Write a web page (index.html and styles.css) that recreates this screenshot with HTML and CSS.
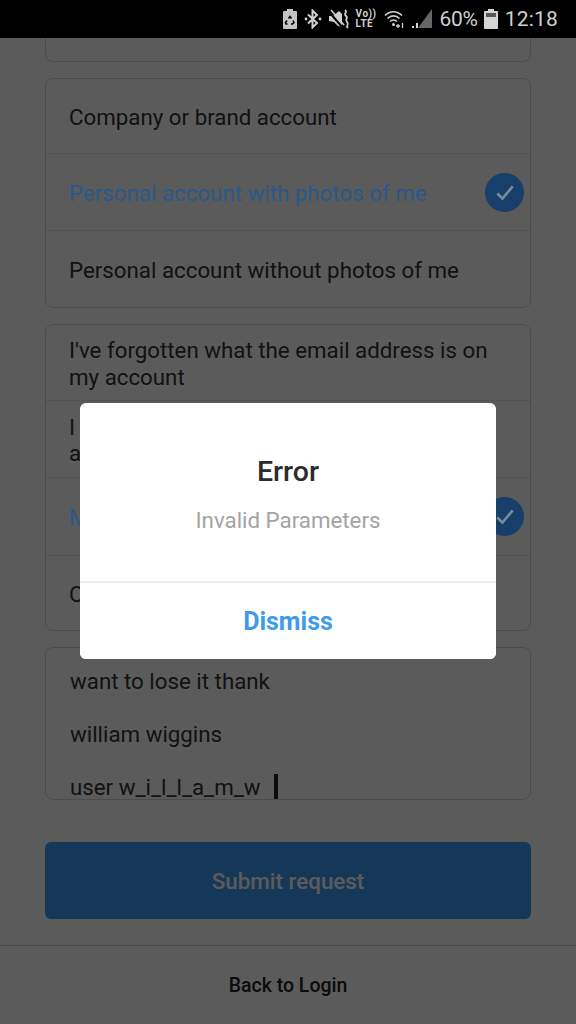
FILE: index.html
```html
<!DOCTYPE html>
<html lang="en">
<head>
<meta charset="utf-8">
<title>Error</title>
<link rel="stylesheet" href="styles.css">
</head>
<body>
<div class="phone">
  <header class="status">
    <svg class="ic-recycle" viewBox="0 0 14 20"><path fill="#c4c4c4" d="M4 0h6v2h3a1 1 0 0 1 1 1v16a1 1 0 0 1-1 1H1a1 1 0 0 1-1-1V3a1 1 0 0 1 1-1h3z"/><path fill="none" stroke="#000" stroke-width="1.500" d="M5.500 9.500 7 7.500l1.500 2M10 11.500l1 2-1.500 1.500H8M4.500 15H3l-.5-1.500L4 11.500"/></svg>
    <svg class="ic-bt" viewBox="0 0 18 20"><path fill="none" stroke="#d0d0d0" stroke-width="2" d="M4 5.500 13 14l-4.500 4.500v-17L13 6l-9 8.500"/><circle cx="2" cy="10" r="1.400" fill="#d0d0d0"/><circle cx="16" cy="10" r="1.400" fill="#d0d0d0"/></svg>
    <svg class="ic-mute" viewBox="0 0 21 20"><path fill="#cfcfcf" d="M0 7h4l6-5 3 3v13l-4-1-4-4-5-1z"/><path stroke="#000" stroke-width="2" d="M0 3l14 16"/><path stroke="#cfcfcf" stroke-width="1.600" d="M2 1l13 15"/><path fill="none" stroke="#cfcfcf" stroke-width="1.800" d="M16 1c3 2-2 4 1 6s-2 3 1 6-2 3 1 6"/></svg>
    <div class="volte"><span>Vo))</span><span>LTE</span></div>
    <svg class="ic-wifi" viewBox="0 0 21 20"><g fill="none" stroke="#d0d0d0" stroke-width="1.700"><path d="M1 6.500c5-5 12-5 17 0"/><path d="M3.500 9.500c3.500-3.500 8.500-3.500 12 0"/><path d="M6 12.500c2-2 5-2 7 0"/></g><circle cx="9.500" cy="15.500" r="1.500" fill="#d0d0d0"/><path stroke="#d0d0d0" stroke-width="1.300" d="M12 17h4M14 15v4M18.500 19v-5"/></svg>
    <svg class="ic-signal" viewBox="0 0 21 20"><path fill="#666" d="M21 0v19H7z"/><path fill="#d8d8d8" d="M1 19v-2h2v2zM5 19v-5h2v5z"/></svg>
    <span class="pct">60%</span>
    <svg class="ic-batt" viewBox="0 0 14 20"><path fill="#d4d4d4" d="M4 0h6v2h3a1 1 0 0 1 1 1v16a1 1 0 0 1-1 1H1a1 1 0 0 1-1-1V3a1 1 0 0 1 1-1h3z"/><path fill="#555" d="M2 4h10v4H2z"/></svg>
    <span class="clock">12:18</span>
  </header>

  <main class="form">
    <div class="card card-cut"></div>

    <ul class="card options">
      <li class="opt">Company or brand account</li>
      <li class="opt on">Personal account with photos of me
        <span class="tick"><svg viewBox="0 0 38 38"><path d="M12 20l5 5 10-12"/></svg></span>
      </li>
      <li class="opt">Personal account without photos of me</li>
    </ul>

    <ul class="card options">
      <li class="opt">I've forgotten what the email address is on my account</li>
      <li class="opt">I can't access the email address on my account</li>
      <li class="opt on">My account was hacked
        <span class="tick"><svg viewBox="0 0 38 38"><path d="M12 20l5 5 10-12"/></svg></span>
      </li>
      <li class="opt">Other</li>
    </ul>

    <div class="card message">
      <p>want to lose it thank</p>
      <p>william wiggins</p>
      <p>user w_i_l_l_a_m_w <span class="caret"></span></p>
    </div>

    <button class="submit" type="button">Submit request</button>
  </main>

  <footer class="foot">Back to Login</footer>

  <div class="scrim"></div>

  <section class="dialog">
    <div class="dialog-body">
      <h2>Error</h2>
      <p>Invalid Parameters</p>
    </div>
    <button class="dismiss" type="button">Dismiss</button>
  </section>
</div>
</body>
</html>
```

FILE: styles.css
```css
* { box-sizing: border-box; }
html, body { margin: 0; padding: 0; }
body { width: 576px; height: 1024px; overflow: hidden; font-family: Roboto, "Liberation Sans", sans-serif; background: #fff; }

.phone { position: relative; width: 576px; height: 1024px; overflow: hidden; display: flex; flex-direction: column; background: #fff; }

.status {
  position: relative; z-index: 3; flex: 0 0 38px; height: 38px; background: #000;
  display: flex; align-items: center; justify-content: flex-end; padding: 0 18px 0 0; color: #d0d0d0;
}
.status svg { display: block; flex: none; }
.ic-recycle { width: 14px; height: 20px; margin-right: 7px; }
.ic-bt { width: 18px; height: 20px; margin-right: 7px; }
.ic-mute { width: 21px; height: 20px; margin-right: 6px; }
.volte { width: 20px; margin-right: 8px; display: flex; flex-direction: column; font-size: 10px; line-height: 10px; font-weight: 700; letter-spacing: 0.500px; white-space: nowrap; }
.ic-wifi { width: 21px; height: 20px; margin-right: 6px; }
.ic-signal { width: 21px; height: 20px; margin-right: 8px; }
.pct { font-size: 21px; letter-spacing: -0.300px; margin-right: 6px; }
.ic-batt { width: 14px; height: 20px; margin-right: 7px; }
.clock { font-size: 21px; letter-spacing: 0.200px; }

.form { flex: 1; display: flex; flex-direction: column; padding: 0 45px; }

.card { border: 1px solid #d6d6d6; border-radius: 8px; margin: 0 0 16px; padding: 0; list-style: none; overflow: hidden; flex: none; }
.card-cut { height: 24px; border-top: 0; border-radius: 0 0 8px 8px; }

.opt {
  position: relative; display: flex; align-items: center; min-height: 77px; padding: 11px 58px 9px 23px;
  font-size: 22.300px; line-height: 26.500px; color: #333; border-top: 1px solid #e4e4e4;
}
.options .opt:first-child { border-top: 0; min-height: 74px; }
.opt.on { z-index: 2; color: #28598a; border-top-color: #525252; }
.options ~ .options .opt { padding-right: 26px; }
.options ~ .options .opt:first-child { min-height: 75px; }
.options ~ .options .opt.on { min-height: 78px; }
.options ~ .options .opt:last-child { min-height: 75px; }

.tick { position: absolute; right: 6px; top: 19px; width: 39px; height: 39px; border-radius: 50%; background: #173f69; }
.tick svg { display: block; width: 100%; height: 100%; fill: none; stroke: #7a8b9e; stroke-width: 2.500; }

.message { height: 153px; padding: 20px 24px 0; font-size: 22.300px; color: #333; margin-bottom: 42px; }
.message p { margin: 0 0 26.500px; line-height: 26.500px; white-space: nowrap; }
.caret { display: inline-block; width: 4px; height: 27px; margin-left: 8px; background: #222; vertical-align: -6px; }

.submit {
  display: block; width: 486px; height: 77px; flex: none; border: 0; border-radius: 6px;
  background: #3d9bf5; color: #fff; font: 500 22.400px Roboto, sans-serif;
}

.foot {
  flex: 0 0 79px; height: 79px; border-top: 1px solid #cfcfcf; display: flex; align-items: center; justify-content: center;
  font-size: 19.500px; font-weight: 500; color: #222;
}

.scrim { position: absolute; z-index: 1; inset: 38px 0 0 0; background: rgba(0, 0, 0, 0.643); }

.dialog {
  position: absolute; z-index: 3; left: 80px; top: 403px; width: 416px; height: 256px;
  background: #fff; border-radius: 6px; display: flex; flex-direction: column; text-align: center; overflow: hidden;
}
.dialog-body { flex: 0 0 180px; padding-top: 50px; border-bottom: 2px solid #eee; }
.dialog h2 { margin: 0; font-size: 28.500px; line-height: 38px; font-weight: 500; color: #2b2b2b; }
.dialog p { margin: 16px 0 0; font-size: 22.300px; line-height: 26px; color: #a3a3a3; }
.dismiss { flex: 1; border: 0; background: #fff; color: #3d9be9; font: 700 25px Roboto, sans-serif; padding: 0; }
```
